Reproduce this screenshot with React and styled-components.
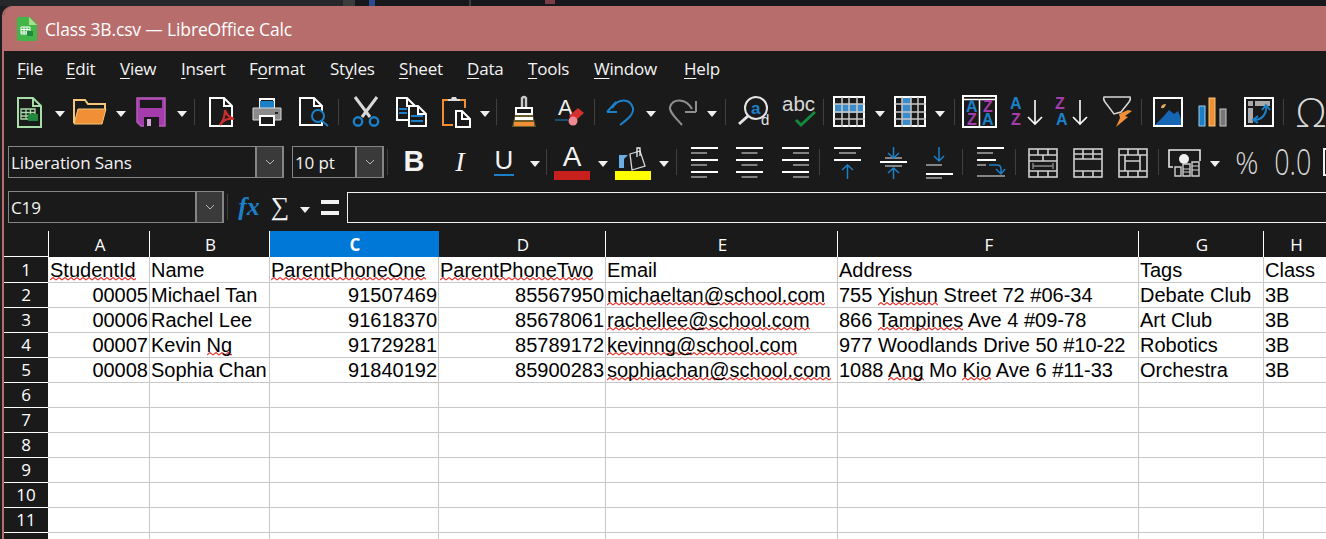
import React from "react";
import styled, { createGlobalStyle } from "styled-components";

const GlobalStyle = createGlobalStyle`
  html, body { margin: 0; padding: 0; background: #1c1d20; overflow: hidden; }
`;

const BLUE = "#1b80c8";
const PURPLE = "#a53cab";
const ORANGE = "#f18f36";
const UI_FONT = `"Open Sans", "Noto Sans", sans-serif`;
const WAVE = `url("data:image/svg+xml,%3Csvg xmlns='http://www.w3.org/2000/svg' width='6' height='4'%3E%3Cpath d='M0 3L3 .5L6 3' fill='none' stroke='%23e2352f' stroke-width='1.1'/%3E%3C/svg%3E")`;

const Page = styled.div`
  width: 1326px;
  height: 539px;
  overflow: hidden;
  background: #1c1d20;
`;
const Backdrop = styled.div`
  height: 6px;
  display: flex;
  background: #17181b;
`;
const BackdropBit = styled.div`
  width: ${p => p.$w}px;
  height: ${p => p.$h || 6}px;
  margin-left: ${p => p.$ml || 0}px;
  background: ${p => p.$color};
`;
const Win = styled.div`
  margin-left: 2px;
  border-left: 2px solid #b76d6c;
  background: #1a1a1a;
  height: 533px;
  overflow: hidden;
  border-top-left-radius: 10px;
`;
const TitleBar = styled.div`
  height: 45px;
  margin-left: -2px;
  background: #b76d6c;
  display: flex;
  align-items: center;
  gap: 8px;
  padding-left: 15px;
  color: #fff;
  font: 17.5px ${UI_FONT};
  letter-spacing: -0.15px;
`;
const MenuBar = styled.div`
  height: 36px;
  display: flex;
  align-items: center;
  padding: 0 0 2px 13px;
  box-sizing: border-box;
  color: #f4f4f4;
  font: 17px ${UI_FONT};
  letter-spacing: -0.2px;
`;
const MenuItem = styled.div`
  width: ${p => p.$w}px;
  flex: none;
  u { text-underline-offset: 3px; }
`;
const ToolRow = styled.div`
  height: ${p => p.$h}px;
  display: flex;
  align-items: center;
  padding-left: ${p => p.$pl}px;
  white-space: nowrap;
`;
const Tool = styled.div`
  width: ${p => p.$w || 45}px;
  margin-left: ${p => p.$ml || 0}px;
  flex: none;
  display: flex;
  align-items: center;
  justify-content: center;
  color: #fff;
`;
const Drop = styled.div`
  width: ${p => p.$w || 16}px;
  flex: none;
  display: flex;
  justify-content: center;
  padding-top: 5px;
  &::before {
    content: "";
    border-left: 5.5px solid transparent;
    border-right: 5.5px solid transparent;
    border-top: 6px solid #f0f0f0;
  }
`;
const Sep = styled.div`
  width: 1px;
  height: 26px;
  flex: none;
  margin-left: ${p => p.$ml || 0}px;
  margin-right: 5px;
  background: #404040;
`;
const Combo = styled.div`
  width: ${p => p.$w}px;
  height: 32px;
  margin-right: ${p => p.$mr || 0}px;
  flex: none;
  box-sizing: border-box;
  border: 1px solid #858585;
  border-right-width: 2px;
  display: flex;
  align-items: center;
  color: #f4f4f4;
  font: 17px ${UI_FONT};
  letter-spacing: -0.1px;
`;
const ComboText = styled.div`
  flex: 1;
  padding: 1px 0 0 2px;
`;
const ComboButton = styled.div`
  width: 25px;
  height: 30px;
  background: #3a3a3a;
  border-left: 2px solid #858585;
  display: flex;
  align-items: center;
  justify-content: center;
`;
const Glyph = styled.span`
  font-family: ${p => p.$serif ? `"Liberation Serif", serif` : `"Liberation Sans", sans-serif`};
  font-size: ${p => p.$size}px;
  font-weight: ${p => p.$bold ? 700 : 400};
  font-style: ${p => p.$italic ? "italic" : "normal"};
  color: ${p => p.$color || "#f2f2f2"};
  line-height: 1;
`;
const ThinGlyph = styled.span`
  font: 300 ${p => p.$size}px/1 "Open Sans", sans-serif;
  color: #d8d8d8;
  display: inline-block;
  transform: scaleX(${p => p.$squeeze || 1});
`;
const FormulaInput = styled.div`
  flex: 1;
  height: 31px;
  box-sizing: border-box;
  border: 1px solid #f0f0f0;
  border-right: none;
  background: #1a1a1a;
`;
const Sheet = styled.div`
  margin-top: 4px;
  display: grid;
  grid-template-columns: 45px 101px 120px 169px 167px 232px 301px 125px 64px;
  grid-template-rows: 26px 26px;
  grid-auto-rows: 25px;
  background: #fff;
  color: #000;
  font: 20px/24px "Liberation Sans", Arial, sans-serif;
`;
const Corner = styled.div`
  background: #1a1a1a;
  box-sizing: border-box;
  border-right: 1px solid #fff;
  border-bottom: 1px solid #fff;
`;
const ColHead = styled.div`
  box-sizing: border-box;
  background: ${p => p.$active ? "#0078d7" : "#1a1a1a"};
  border-right: 1px solid ${p => p.$active ? "#0078d7" : "#fff"};
  color: #fff;
  padding-left: 2px;
  font: ${p => p.$active ? 700 : 400} 17px/28px ${UI_FONT};
  text-align: center;
`;
const RowHead = styled.div`
  background: #1a1a1a;
  color: #fff;
  box-sizing: border-box;
  padding-top: ${p => p.$first ? 1 : 0}px;
  border-bottom: 1px solid #fff;
  font: 17px/24px ${UI_FONT};
  text-align: center;
  margin-right: 1px;
`;
const Cell = styled.div`
  box-sizing: border-box;
  margin-left: -1px;
  padding: ${p => p.$first ? 1 : 0}px ${p => p.$num ? 1 : 2}px 0 ${p => p.$num ? 0 : 2}px;
  border-right: 1px solid #c8c8c8;
  border-bottom: 1px solid #c8c8c8;
  text-align: ${p => p.$num ? "right" : "left"};
  white-space: nowrap;
  overflow: hidden;
`;
const Typo = styled.span`
  background: ${WAVE} repeat-x 0 100%;
`;

// toolbar icons, all drawn to their size in the screenshot
const IconSvg = styled.svg`
  overflow: visible;
  margin-top: ${p => p.$dy || 0}px;
`;
const Ico = ({ w, h, dy, children }) => (
  <IconSvg width={w} height={h} viewBox={`0 0 ${w} ${h}`} fill="none" $dy={dy}>{children}</IconSvg>
);
const Doc = ({ x = 0, y = 0, w = 22, h = 28, stroke = "#fff", fill = "none" }) => (
  <path d={`M${x + 1} ${y + 1}h${w - 9}l8 8v${h - 9}h-${w - 1}zM${x + w - 8} ${y + 1}v8h8`} stroke={stroke} strokeWidth="2" fill={fill} />
);

const NewCalc = () => (
  <Ico w={24} h={30}>
    <Doc w={24} h={30} stroke="#a8dca8" />
    <path d="M4 12h14v10H4zM4 15.5h14M4 19h14M9 12v10M13.5 12v10" stroke="#a8dca8" strokeWidth="1.3" />
    <rect x="11" y="17" width="10" height="7" fill="#1f8a3e" />
  </Ico>
);
const Open = () => (
  <Ico w={34} h={27}>
    <path d="M1 25V2h11l3 4h17v5" stroke="#f5c879" strokeWidth="2" />
    <path d="M5 11h28l-4 15H1z" fill={ORANGE} stroke="#f5c879" strokeWidth="1" />
  </Ico>
);
const Save = () => (
  <Ico w={30} h={30}>
    <path d="M1 1h28v28H5l-4-4z" fill={PURPLE} stroke="#b65dbb" strokeWidth="1.5" />
    <rect x="4" y="3" width="22" height="8" fill="#1a1a1a" />
    <rect x="8" y="20" width="15" height="10" fill="#1a1a1a" />
    <rect x="11" y="22" width="4" height="7" fill="#d5a4d8" />
  </Ico>
);
const Pdf = () => (
  <Ico w={26} h={30}>
    <Doc w={23} h={29} />
    <path d="M11 28c4-5 5-11 5-15 1 4 3 7 9 9-5-1-10 0-14 6z" stroke="#c9302c" strokeWidth="2.2" />
  </Ico>
);
const Printer = () => (
  <Ico w={30} h={28}>
    <path d="M8 10V1h14v9" stroke="#fff" strokeWidth="2" />
    <rect x="8" y="3" width="14" height="7" fill={BLUE} />
    <path d="M1 10h28v12H1z" fill="#8b8b8b" stroke="#d8d8d8" strokeWidth="1" />
    <path d="M8 18h14v9H8z" fill="#1a1a1a" stroke="#fff" strokeWidth="2" />
    <rect x="23" y="14" width="3" height="2" fill="#222" />
  </Ico>
);
const Preview = () => (
  <Ico w={30} h={30}>
    <Doc w={23} h={28} />
    <circle cx="19" cy="19" r="6" fill="#1a1a1a" stroke={BLUE} strokeWidth="2" />
    <path d="M23 24l6 5" stroke={BLUE} strokeWidth="2" />
  </Ico>
);
const Cut = () => (
  <Ico w={28} h={31}>
    <path d="M3 1l15 20M25 1L10 21" stroke="#d8d8d8" strokeWidth="3" />
    <circle cx="6" cy="25.5" r="4.2" stroke={BLUE} strokeWidth="2.4" />
    <circle cx="22" cy="25.5" r="4.2" stroke={BLUE} strokeWidth="2.4" />
  </Ico>
);
const Copy = () => (
  <Ico w={31} h={30}>
    <Doc w={19} h={23} />
    <path d="M3 12h8M3 16h8" stroke={BLUE} strokeWidth="2" />
    <Doc x={12} y={8} w={18} h={21} fill="#1a1a1a" />
    <path d="M15 19h12M15 24h12" stroke={BLUE} strokeWidth="2" />
  </Ico>
);
const Paste = () => (
  <Ico w={30} h={32}>
    <path d="M7 4H2v25h10M19 4h5v8" stroke={ORANGE} strokeWidth="2" />
    <path d="M7 5V3h3l1-2h4l1 2h3v2z" fill="#ddd" />
    <Doc x={14} y={14} w={15} h={17} fill="#1a1a1a" />
  </Ico>
);
const Brush = () => (
  <Ico w={24} h={32}>
    <path d="M10 11V2q2-2 4 0v9" stroke="#c8c8c8" strokeWidth="2.4" />
    <path d="M4 12h16v6H4z" fill="#1a1a1a" stroke="#fff" strokeWidth="2" />
    <path d="M3 19h18l3 12H0z" fill="#6b5a2a" />
    <rect x="3" y="21" width="18" height="3" fill="#fff" />
    <rect x="2" y="26" width="20" height="4" fill={ORANGE} />
  </Ico>
);
const ClearFormat = () => (
  <Ico w={30} h={31}>
    <text x="3" y="19" fontFamily="Liberation Sans" fontSize="22" fill="#eee">A</text>
    <path d="M0 24h13" stroke={BLUE} strokeWidth="1" />
    <path d="M14 20l9-8 6 5-9 8z" fill="#d62f2f" />
    <circle cx="18" cy="25" r="4.5" fill="#f08a92" />
  </Ico>
);
const Undo = () => (
  <Ico w={29} h={28}>
    <path d="M1 14l10 0M1 14l9-10M6 10C12 0 24 0 27 10c1 6-5 11-13 17" stroke={BLUE} strokeWidth="2" />
  </Ico>
);
const Redo = () => (
  <Ico w={29} h={28}>
    <path d="M28 14H17M28 14V3M24 11C18 0 5 0 2 9c-1 5 6 11 12 18" stroke="#8e8e8e" strokeWidth="2" />
  </Ico>
);
const Find = () => (
  <Ico w={33} h={32}>
    <circle cx="19" cy="12" r="11" stroke="#e4e4e4" strokeWidth="2" />
    <path d="M11 20L2 28" stroke="#e4e4e4" strokeWidth="3" />
    <text x="14" y="18" fontFamily="Liberation Sans" fontWeight="700" fontSize="17" fill={BLUE}>a</text>
    <text x="24" y="29" fontFamily="Liberation Sans" fontSize="15" fill="#e4e4e4">d</text>
  </Ico>
);
const Spell = () => (
  <Ico w={34} h={32}>
    <text x="0" y="15" fontFamily="Liberation Sans" fontSize="20.5" fill="#d8d8d8">abc</text>
    <path d="M14 24l5 5L33 16" stroke="#14883e" strokeWidth="3" />
  </Ico>
);
const TableLines = ({ w, h, cols, rows }) => (
  <>
    <rect x="1" y="1" width={w - 2} height={h - 2} stroke="#fff" strokeWidth="2" />
    {cols.map(x => <path key={x} d={`M${x} 1V${h}`} stroke="#c8c8c8" strokeWidth="1.5" />)}
    {rows.map(y => <path key={y} d={`M1 ${y}H${w}`} stroke="#c8c8c8" strokeWidth="1.5" />)}
  </>
);
const RowGrid = () => (
  <Ico w={32} h={31}>
    <rect x="1" y="8" width="30" height="9" fill="#3a8ccb" />
    <TableLines w={32} h={31} cols={[9, 16, 24]} rows={[8, 16, 23]} />
  </Ico>
);
const ColGrid = () => (
  <Ico w={32} h={31}>
    <rect x="8" y="1" width="9" height="29" fill="#3a8ccb" />
    <TableLines w={32} h={31} cols={[8, 17, 24]} rows={[8, 16, 23]} />
  </Ico>
);
const SortLetter = styled.text`
  font: 700 16px "Liberation Sans", sans-serif;
`;
const SortDialog = () => (
  <Ico w={35} h={33}>
    <rect x="1" y="1" width="33" height="31" stroke="#fff" strokeWidth="2" />
    <path d="M1 4.5h33M17.5 4v28" stroke="#fff" strokeWidth="1.5" />
    <SortLetter x="4" y="17" fill={BLUE}>A</SortLetter>
    <SortLetter x="5" y="30" fill={PURPLE}>Z</SortLetter>
    <SortLetter x="21" y="17" fill={PURPLE}>Z</SortLetter>
    <SortLetter x="20" y="30" fill={BLUE}>A</SortLetter>
  </Ico>
);
const SortArrow = ({ top, bottom, topColor, bottomColor }) => (
  <Ico w={33} h={31}>
    <SortLetter x="0" y="13" fill={topColor}>{top}</SortLetter>
    <SortLetter x="1" y="29" fill={bottomColor}>{bottom}</SortLetter>
    <path d="M25 4v24M18 21l7 7 7-7" stroke="#fff" strokeWidth="1.6" />
  </Ico>
);
const Filter = () => (
  <Ico w={31} h={32}>
    <path d="M2 1h26q1 2-1 5L19 16l-7 2L3 6Q1 3 2 1z" stroke="#d8d8d8" strokeWidth="1.5" />
    <path d="M17 18l9-4 4 1-7 5 3 1-12 10 4-9z" fill={ORANGE} />
  </Ico>
);
const ImageIcon = () => (
  <Ico w={30} h={30}>
    <rect x="1" y="1" width="28" height="28" stroke="#fff" strokeWidth="2" />
    <path d="M2 28l8-8 6-7 5 4 4-3 3 8v6z" fill="#1766b4" />
    <path d="M8 11q0-4 5-4-1 5-5 4z" fill="#e0a860" />
  </Ico>
);
const Chart = () => (
  <Ico w={29} h={30}>
    <rect x="1" y="9" width="6" height="20" fill={BLUE} stroke="#9ccbea" />
    <rect x="11" y="1" width="6" height="28" fill={ORANGE} stroke="#f5c879" />
    <rect x="22" y="12" width="6" height="17" fill="#777" stroke="#c8c8c8" />
  </Ico>
);
const Pivot = () => (
  <Ico w={30} h={30}>
    <rect x="1" y="1" width="28" height="28" stroke="#fff" strokeWidth="2" />
    <rect x="4" y="4" width="5" height="5" fill="#aaa" />
    <rect x="11" y="4" width="15" height="5" fill="#aaa" />
    <rect x="4" y="11" width="5" height="15" fill="#aaa" />
    <path d="M22 9c1 8-4 14-12 14M18 13l4-5 4 5M14 19l-5 4 5 3" stroke={BLUE} strokeWidth="2" />
  </Ico>
);
const AlignLines = ({ side }) => {
  const x = { left: 0, center: 5.5, right: 11 }[side];
  return (
    <Ico w={27} h={31} dy={2}>
      {[1, 13, 25].map(y => <path key={y} d={`M0 ${y}h27`} stroke="#fff" strokeWidth="2" />)}
      {[6, 18, 30].map(y => <path key={y} d={`M${x} ${y}h16`} stroke="#e8e8e8" strokeWidth="1" />)}
    </Ico>
  );
};
const VAlign = ({ kind }) => (
  <Ico w={27} h={32} dy={2}>
    {kind === "top" && <>
      <path d="M0 1h27M0 13h27" stroke="#fff" strokeWidth="2" />
      <path d="M5 6h17" stroke="#eee" />
      <path d="M13.5 32V18M8 23l5.5-5 5.5 5" stroke={BLUE} strokeWidth="1.5" />
    </>}
    {kind === "center" && <>
      <path d="M0 15h27" stroke="#fff" strokeWidth="2" />
      <path d="M5 19h17M5 11h17" stroke="#eee" />
      <path d="M13.5 0v10M8 6l5.5 5 5.5-5M13.5 32V21M8 26l5.5-5 5.5 5" stroke={BLUE} strokeWidth="1.5" />
    </>}
    {kind === "bottom" && <>
      <path d="M0 27h27" stroke="#fff" strokeWidth="2" />
      <path d="M0 18h16M0 31h16" stroke="#eee" />
      <path d="M13 0v14M8 9l5 5 5-5" stroke={BLUE} strokeWidth="1.5" />
    </>}
  </Ico>
);
const Wrap = () => (
  <Ico w={28} h={31} dy={2}>
    <path d="M0 1h27M0 13h19" stroke="#fff" strokeWidth="2" />
    <path d="M0 6h16M0 18h9M0 29h28" stroke="#eee" />
    <path d="M12 18h8q4 0 4 4v5M19 22l5 5 4-5" stroke={BLUE} strokeWidth="1.5" />
  </Ico>
);
const Merge = ({ d, children }) => (
  <Ico w={30} h={30} dy={2}>
    <rect x="1" y="1" width="28" height="28" stroke="#d0d0d0" strokeWidth="1.6" />
    <path d={d} stroke="#d0d0d0" strokeWidth="1.6" />
    {children}
  </Ico>
);
const Currency = () => (
  <Ico w={34} h={29} dy={2}>
    <path d="M1 9V2h31v7M1 9v10h4M32 9v4" stroke="#e8e8e8" strokeWidth="1.6" />
    <circle cx="16" cy="11" r="5" fill="#eee" />
    <path d="M7 28v-9h6v9zM15 28V16h7v12zM24 28V14h7v14z" stroke="#d0d0d0" strokeWidth="1.4" fill="#1a1a1a" />
    <path d="M15 21h7M15 24h7M24 18h7M24 22h7" stroke="#d0d0d0" />
  </Ico>
);
const Chevron = () => (
  <svg width="10" height="6" viewBox="0 0 10 6" fill="none"><path d="M1 1l4 4 4-4" stroke="#b8b8b8" /></svg>
);
const LibreCalcLogo = () => (
  <svg width="20" height="24" viewBox="0 0 20 24" fill="none">
    <path d="M2 0h11l7 7v15q0 2-2 2H2q-2 0-2-2V2q0-2 2-2z" fill="#43b649" />
    <path d="M12 0l8 8h-8z" fill="#a5e08a" />
    <path d="M4 10h9v7H4zM4 12.5h9M4 15h9M7 10v7M10 10v7" stroke="#fff" strokeWidth="1" />
    <rect x="10" y="14" width="6" height="5" fill="#1f8a3e" />
  </svg>
);
const Underlined = styled.span`
  display: inline-block;
  font-weight: 400;
  border-bottom: 2px solid ${BLUE};
  padding: 0 1px 1px;
`;
const ColorPick = styled.div`
  display: flex;
  flex-direction: column;
  align-items: center;
  justify-content: flex-end;
  width: 36px;
  height: 37px;
  &::after {
    content: "";
    width: 36px;
    height: 9px;
    flex: none;
    background: ${p => p.$bar};
  }
`;
const Bucket = () => (
  <Ico w={28} h={24}>
    <path d="M0 21V8h9L5 12v9z" fill="#6aaee5" />
    <path d="M11 7l10-3 5 15-13 4z" stroke="#d8d8d8" strokeWidth="1.3" />
    <path d="M18 10V1h3v8" stroke="#eee" strokeWidth="1.3" />
  </Ico>
);
const EqualSign = styled.div`
  width: 18px;
  height: 15px;
  box-sizing: border-box;
  border-top: 4px solid #f2f2f2;
  border-bottom: 4px solid #f2f2f2;
`;
const PartialIcon = styled.div`
  width: 10px;
  height: 28px;
  box-sizing: border-box;
  border: 2px solid #f0f0f0;
`;

const menus = [
  ["F", "ile", 49], ["E", "dit", 54], ["V", "iew", 61], ["I", "nsert", 68],
  ["", "F", 81, "o", "rmat"], ["", "St", 69, "y", "les"], ["S", "heet", 68], ["D", "ata", 61],
  ["T", "ools", 66], ["W", "indow", 90], ["H", "elp", 50],
];

const cols = ["A", "B", "C", "D", "E", "F", "G", "H"];
const rows = [
  [<Typo>StudentId</Typo>, "Name", <Typo>ParentPhoneOne</Typo>, <Typo>ParentPhoneTwo</Typo>, "Email", "Address", "Tags", "Class"],
  ["00005", "Michael Tan", "91507469", "85567950", <Typo>michaeltan@school.com</Typo>, <>755 <Typo>Yishun</Typo> Street 72 #06-34</>, "Debate Club", "3B"],
  ["00006", "Rachel Lee", "91618370", "85678061", <Typo>rachellee@school.com</Typo>, <>866 <Typo>Tampines</Typo> Ave 4 #09-78</>, "Art Club", "3B"],
  ["00007", <>Kevin <Typo>Ng</Typo></>, "91729281", "85789172", <Typo>kevinng@school.com</Typo>, "977 Woodlands Drive 50 #10-22", "Robotics", "3B"],
  ["00008", "Sophia Chan", "91840192", "85900283", <Typo>sophiachan@school.com</Typo>, <>1088 <Typo>Ang</Typo> Mo <Typo>Kio</Typo> Ave 6 #11-33</>, "Orchestra", "3B"],
];
const numericCols = [0, 2, 3];
const emptyRows = [6, 7, 8, 9, 10, 11, 12];

export default function App() {
  return (
    <Page>
      <GlobalStyle />
      <Backdrop>
        <BackdropBit $w={343} $color="#26272b" />
        <BackdropBit $w={12} $color="#3c3c3c" />
        <BackdropBit $w={6} $ml={14} $color="#2a4a8f" />
        <BackdropBit $w={2} $ml={94} $color="#3c3c3c" />
        <BackdropBit $w={10} $h={4} $ml={74} $color="#7a3c48" />
      </Backdrop>
      <Win>
        <TitleBar>
          <LibreCalcLogo />
          Class 3B.csv — LibreOffice Calc
        </TitleBar>
        <MenuBar>
          {menus.map(([under, rest, w, under2, rest2]) => (
            <MenuItem key={w + rest} $w={w}>
              {under && <u>{under}</u>}{rest}{under2 && <u>{under2}</u>}{rest2}
            </MenuItem>
          ))}
        </MenuBar>

        <ToolRow $h={49} $pl={2.5}>
          <Tool><NewCalc /></Tool><Drop />
          <Tool><Open /></Tool><Drop />
          <Tool><Save /></Tool><Drop />
          <Sep $ml={4} />
          <Tool><Pdf /></Tool>
          <Tool><Printer /></Tool>
          <Tool $w={48}><Preview /></Tool>
          <Sep />
          <Tool><Cut /></Tool>
          <Tool><Copy /></Tool>
          <Tool $w={44}><Paste /></Tool><Drop $w={14} />
          <Sep $ml={4} />
          <Tool><Brush /></Tool>
          <Tool $w={47}><ClearFormat /></Tool>
          <Sep />
          <Tool $w={41}><Undo /></Tool><Drop $w={20} />
          <Tool $w={43}><Redo /></Tool><Drop $w={17} />
          <Sep $ml={4} />
          <Tool><Find /></Tool>
          <Tool $w={47}><Spell /></Tool>
          <Sep />
          <Tool $w={41}><RowGrid /></Tool><Drop $w={21} />
          <Tool $w={39}><ColGrid /></Tool><Drop $w={20} />
          <Sep $ml={4} />
          <Tool $w={40}><SortDialog /></Tool>
          <Tool $w={53}><SortArrow top="A" bottom="Z" topColor={BLUE} bottomColor={PURPLE} /></Tool>
          <Tool $w={37}><SortArrow top="Z" bottom="A" topColor={PURPLE} bottomColor={BLUE} /></Tool>
          <Tool $w={46} $ml={5}><Filter /></Tool>
          <Sep />
          <Tool $w={43}><ImageIcon /></Tool>
          <Tool $w={46}><Chart /></Tool>
          <Tool $w={47}><Pivot /></Tool>
          <Sep />
          <Tool><ThinGlyph $size={40}>Ω</ThinGlyph></Tool>
        </ToolRow>

        <ToolRow $h={51} $pl={4}>
          <Combo $w={276} $mr={8}><ComboText>Liberation Sans</ComboText><ComboButton><Chevron /></ComboButton></Combo>
          <Combo $w={92} $mr={3}><ComboText>10 pt</ComboText><ComboButton><Chevron /></ComboButton></Combo>
          <Sep />
          <Tool $w={42}><Glyph $size={29} $bold>B</Glyph></Tool>
          <Tool $w={50}><Glyph $size={28} $italic $serif>I</Glyph></Tool>
          <Tool $w={38}><Glyph $size={26}><Underlined>U</Underlined></Glyph></Tool>
          <Drop $w={23} />
          <Sep />
          <Tool $w={40}><ColorPick $bar="#c8201c"><Glyph $size={28}>A</Glyph></ColorPick></Tool><Drop $w={22} />
          <Tool $w={38}><ColorPick $bar="#ffff00"><Bucket /></ColorPick></Tool><Drop $w={24} />
          <Sep />
          <Tool><AlignLines side="left" /></Tool>
          <Tool><AlignLines side="center" /></Tool>
          <Tool $w={47}><AlignLines side="right" /></Tool>
          <Sep />
          <Tool><VAlign kind="top" /></Tool>
          <Tool $w={46}><VAlign kind="center" /></Tool>
          <Tool $w={46}><VAlign kind="bottom" /></Tool>
          <Sep />
          <Tool><Wrap /></Tool>
          <Sep $ml={2} />
          <Tool $w={44}>
            <Merge d="M1 7h28M1 13h28M1 23h28M10 1v6M20 1v6M15 7v6M10 23v6M20 23v6">
              <path d="M5 18h20M5 15v6M25 15v6" stroke="#8a8a8a" strokeWidth="1.4" />
            </Merge>
          </Tool>
          <Tool><Merge d="M1 6h28M1 11h28M1 23h28M10 1v10M20 1v10M10 23v6M20 23v6" /></Tool>
          <Tool><Merge d="M1 7h28M1 23h28M10 1v6M20 1v6M7 7v16M22 7v16M7 13h15M10 23v6M20 23v6" /></Tool>
          <Sep $ml={3} />
          <Tool $w={41}><Currency /></Tool><Drop $w={20} />
          <Tool $w={44}><ThinGlyph $size={32} $squeeze={0.9}>%</ThinGlyph></Tool>
          <Tool $w={48}><ThinGlyph $size={36} $squeeze={0.75}>0.0</ThinGlyph></Tool>
          <Tool $w={10} $ml={6}><PartialIcon /></Tool>
        </ToolRow>

        <ToolRow $h={40} $pl={4}>
          <Combo $w={216} $mr={3}><ComboText>C19</ComboText><ComboButton><Chevron /></ComboButton></Combo>
          <Sep />
          <Tool $w={28} $ml={2}><Glyph $size={26} $italic $bold $serif $color={BLUE}>fx</Glyph></Tool>
          <Tool $w={34}><Glyph $size={26} $serif>∑</Glyph></Tool>
          <Drop />
          <Tool $w={34}><EqualSign /></Tool>
          <FormulaInput />
        </ToolRow>

        <Sheet>
          <Corner />
          {cols.map(c => <ColHead key={c} $active={c === "C"}>{c}</ColHead>)}
          {rows.map((row, i) => (
            <React.Fragment key={i}>
              <RowHead $first={i === 0}>{i + 1}</RowHead>
              {row.map((value, j) => (
                <Cell key={j} $first={i === 0} $num={i > 0 && numericCols.includes(j)}>{value}</Cell>
              ))}
            </React.Fragment>
          ))}
          {emptyRows.map(n => (
            <React.Fragment key={n}>
              <RowHead>{n < 12 ? n : ""}</RowHead>
              {cols.map(c => <Cell key={c} />)}
            </React.Fragment>
          ))}
        </Sheet>
      </Win>
    </Page>
  );
}
